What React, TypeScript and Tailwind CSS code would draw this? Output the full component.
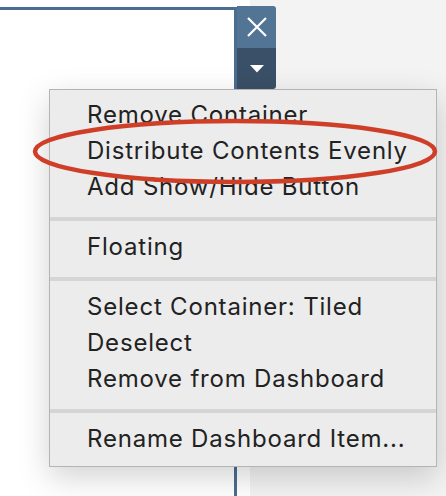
const groups: string[][] = [
  ["Remove Container", "Distribute Contents Evenly", "Add Show/Hide Button"],
  ["Floating"],
  ["Select Container: Tiled", "Deselect", "Remove from Dashboard"],
  ["Rename Dashboard Item..."],
]

export default function App() {
  return (
    <div className="relative flex w-[446px] h-[496px] overflow-hidden" style={{ fontFamily: "Inter, 'Liberation Sans', sans-serif" }}>
      {/* dashboard canvas */}
      <div className="w-[250px] bg-white">
        <div className="mt-[7px] w-[237px] h-full border-t-[3px] border-r-[3px] border-[#4b6d8f] bg-white" />
      </div>
      <div className="flex-1 bg-[#f3f3f3]" />

      {/* container toolbar */}
      <div className="absolute left-[237px] top-[6px] flex h-[83px] w-[39px] flex-col overflow-hidden rounded-r-[3px]">
        <div className="flex h-[42px] items-center justify-center bg-[#527596]">
          <svg width="20" height="20" viewBox="0 0 20 20">
            <path d="M1 1 L19 19 M19 1 L1 19" stroke="white" strokeWidth="2.2" />
          </svg>
        </div>
        <div className="flex flex-1 items-center justify-center bg-[#3a5068]">
          <svg width="14" height="8" viewBox="0 0 14 8">
            <path d="M0 0 L14 0 L7 7.5 Z" fill="white" />
          </svg>
        </div>
      </div>

      {/* context menu */}
      <div className="absolute left-[49px] top-[89px] w-[388px] border border-[#b4b4b4] bg-[#ececec] pt-[7px] pb-[9px] text-[24px] leading-[36px] tracking-[0.8px] text-[#222] shadow-[0_10px_30px_rgba(0,0,0,0.18)]">
        {groups.map((g, i) => (
          <div key={i}>
            {i > 0 && <div className="mt-[12px] mb-[8px] h-[4px] bg-[#d5d5d5]" />}
            {g.map((t) => (
              <div key={t} className="pl-[37px] whitespace-nowrap">{t}</div>
            ))}
          </div>
        ))}
      </div>

      {/* annotation */}
      <svg className="absolute left-0 top-0" width="446" height="496">
        <ellipse cx="235" cy="151.5" rx="200" ry="30.5" fill="none" stroke="#cf3f28" strokeWidth="4.5" />
      </svg>
    </div>
  )
}
